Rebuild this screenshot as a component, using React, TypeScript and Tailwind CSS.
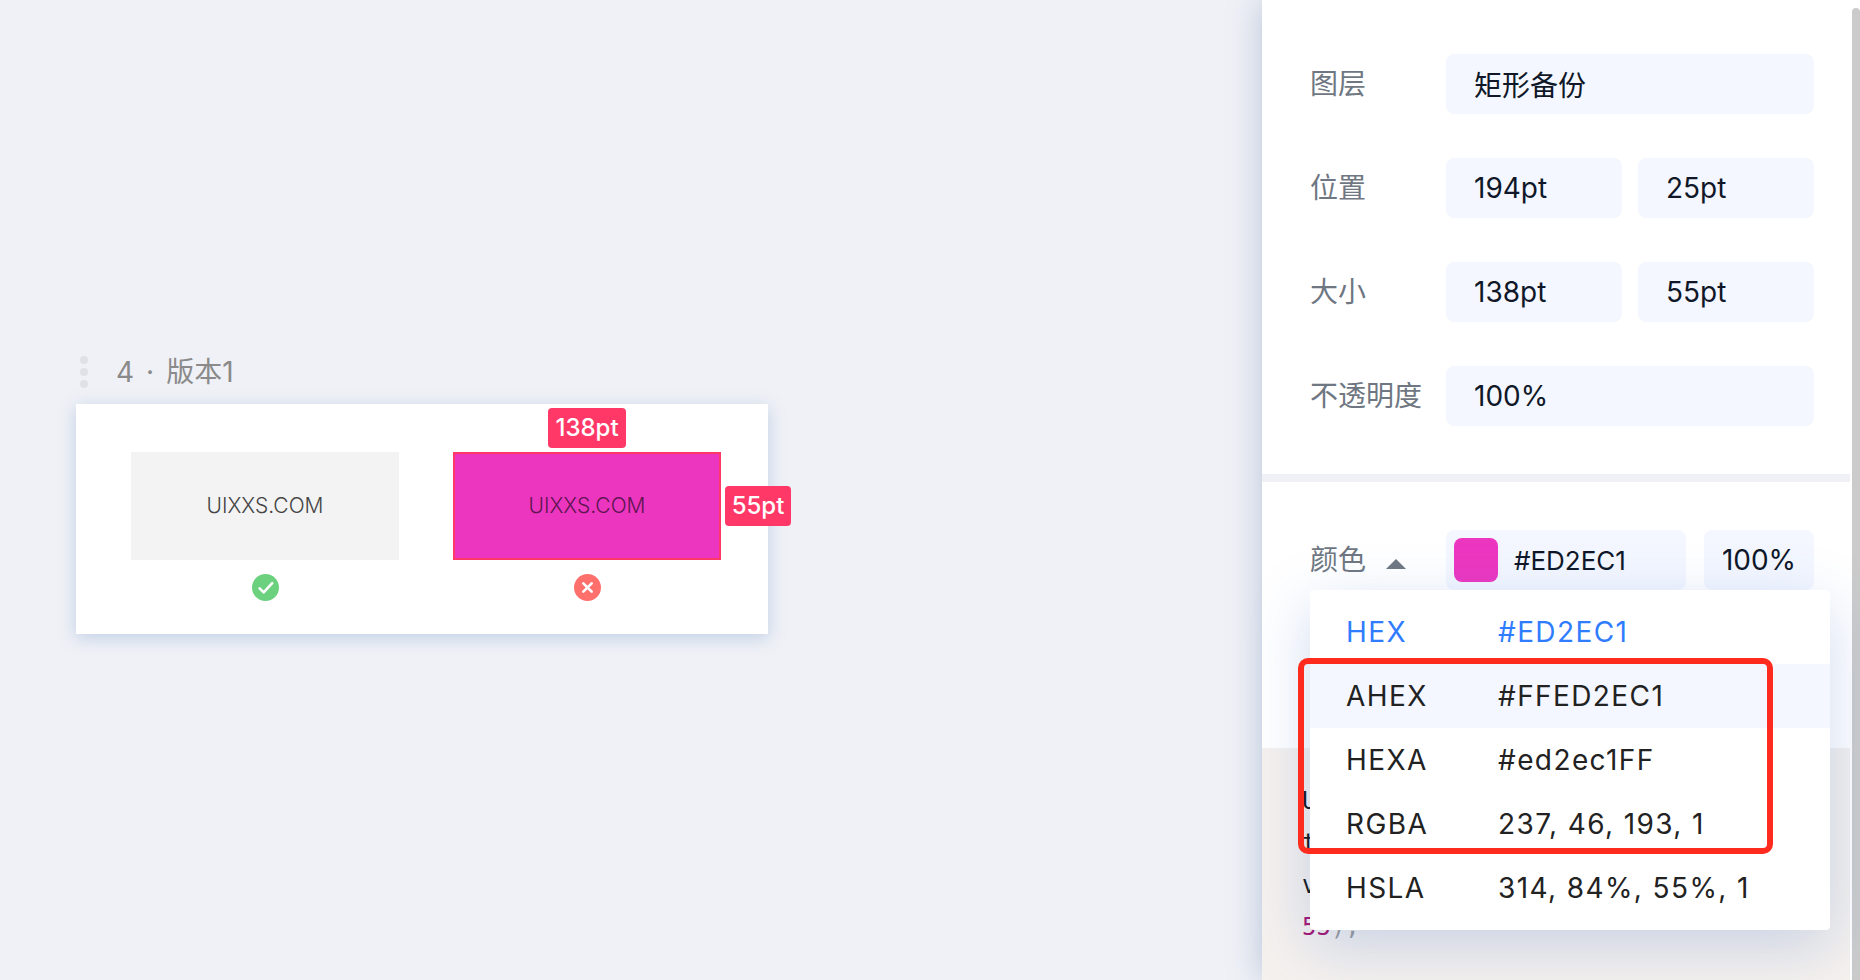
import { useState } from 'react';
import { clsx } from 'clsx';

const formats = [
  { name: 'HEX', value: '#ED2EC1' },
  { name: 'AHEX', value: '#FFED2EC1' },
  { name: 'HEXA', value: '#ed2ec1FF' },
  { name: 'RGBA', value: '237, 46, 193, 1' },
  { name: 'HSLA', value: '314, 84%, 55%, 1' },
];

interface FieldRowProps {
  id: string;
  label: string;
  values: string[];
}

const FieldRow = ({ id, label, values }: FieldRowProps) => (
  <div className="flex items-center">
    <label htmlFor={id} className="w-[136px] shrink-0 text-[#6f7782]">
      {label}
    </label>
    <div className="flex flex-1 gap-4">
      {values.map((value, i) => (
        <input
          key={i}
          id={i === 0 ? id : undefined}
          aria-label={i === 0 ? undefined : label}
          defaultValue={value}
          className="h-[60px] w-full min-w-0 flex-1 rounded-lg bg-[#f4f7ff] px-7 text-[#0f1728] outline-none"
        />
      ))}
    </div>
  </div>
);

const CheckIcon = () => (
  <svg viewBox="0 0 27 27" className="size-[27px]" fill="none">
    <circle cx="13.5" cy="13.5" r="13.5" fill="#6bd17f" />
    <path d="M7.600 14.400l4.100 4L20.200 9.200" stroke="#fff" strokeWidth="2.600" strokeLinecap="round" strokeLinejoin="round" />
  </svg>
);

const CrossIcon = () => (
  <svg viewBox="0 0 27 27" className="size-[27px]" fill="none">
    <circle cx="13.5" cy="13.5" r="13.5" fill="#ff706c" />
    <path d="M9.300 9.300l8.400 8.400M17.700 9.300l-8.400 8.400" stroke="#fff" strokeWidth="2.600" strokeLinecap="round" />
  </svg>
);

const Badge = ({ text, className }: { text: string; className: string }) => (
  <span
    className={clsx(
      'absolute flex h-10 items-center justify-center rounded bg-[#ff3868] text-2xl font-medium text-white',
      className
    )}
  >
    {text}
  </span>
);

const Artboard = () => (
  <section className="w-[692px]">
    <h2 className="flex h-8 items-center gap-3 text-[28px] text-[#8a8a8a]">
      <span className="ml-1 mr-4 flex flex-col gap-1">
        <i className="size-2 rounded-full bg-[#dfe1e6]" />
        <i className="size-2 rounded-full bg-[#dfe1e6]" />
        <i className="size-2 rounded-full bg-[#dfe1e6]" />
      </span>
      <span>4</span>
      <span>·</span>
      <span>版本1</span>
    </h2>
    <div className="mt-4 flex h-[230px] justify-between bg-white pl-[55px] pr-[47px] pt-12 text-[21px] font-light shadow-[0_4px_16px_rgba(110,145,200,0.35)]">
      <div className="flex w-[268px] flex-col items-center">
        <div className="flex h-[108px] w-full items-center justify-center bg-[#f3f3f3] text-[#444]">UIXXS.COM</div>
        <div className="mt-[14px]">
          <CheckIcon />
        </div>
      </div>
      <div className="flex w-[268px] flex-col items-center">
        <div className="relative flex h-[108px] w-full items-center justify-center border-2 border-[#ff3868] bg-[#ed36c0] text-[#5e1550]">
          UIXXS.COM
          <Badge text="138pt" className="bottom-full left-1/2 mb-[6px] w-[78px] -translate-x-1/2" />
          <Badge text="55pt" className="left-full top-1/2 ml-[6px] w-[66px] -translate-y-1/2" />
        </div>
        <div className="mt-[14px]">
          <CrossIcon />
        </div>
      </div>
    </div>
  </section>
);

const FormatMenu = ({ current, onSelect }: { current: string; onSelect: (name: string) => void }) => (
  <ul className="absolute left-12 right-5 top-[108px] z-10 rounded bg-white py-[10px] tracking-wider shadow-[0_16px_60px_rgba(75,120,200,0.26)]">
    {formats.map(format => (
      <li key={format.name}>
        <button
          onClick={() => onSelect(format.name)}
          className={clsx(
            'flex h-16 w-full items-center pl-9 text-left',
            format.name === current ? 'text-[#2f7cff]' : 'text-[#222]',
            format.name === 'AHEX' && 'bg-[#f4f7ff]'
          )}
        >
          <span className="w-[152px]">{format.name}</span>
          <span>{format.value}</span>
        </button>
      </li>
    ))}
    {/* highlight around the alpha formats */}
    <li aria-hidden className="pointer-events-none absolute -left-3 right-[57px] top-[68px] h-[196px] rounded-[10px] border-[6px] border-[#ff2b1f]" />
  </ul>
);

export default function App() {
  const [open, setOpen] = useState(true);
  const [current, setCurrent] = useState('HEX');

  return (
    <div className="flex h-screen overflow-hidden bg-[#eff1f6] font-['Inter','Noto_Sans_CJK_SC',sans-serif]">
      <main className="min-w-0 flex-1 pl-[76px] pt-[356px]">
        <Artboard />
      </main>

      <aside className="flex w-[598px] shrink-0 bg-white text-[28px] shadow-[0_0_32px_rgba(90,120,170,0.36)]">
        <div className="flex min-w-0 flex-1 flex-col">
          <section className="flex flex-col gap-11 border-b-8 border-[#eff1f6] pb-12 pl-12 pr-9 pt-[54px]">
            <FieldRow id="layer" label="图层" values={['矩形备份']} />
            <FieldRow id="position" label="位置" values={['194pt', '25pt']} />
            <FieldRow id="size" label="大小" values={['138pt', '55pt']} />
            <FieldRow id="opacity" label="不透明度" values={['100%']} />
          </section>

          <section className="relative h-[266px] pl-12 pr-9 pt-12">
            <div className="flex items-center">
              <button onClick={() => setOpen(!open)} className="flex w-[136px] shrink-0 items-center gap-5 text-[#6f7782]">
                颜色
                <svg viewBox="0 0 20 10" className="mt-2 h-[10px] w-5" fill="currentColor">
                  <path d="M10 0l10 10H0z" />
                </svg>
              </button>
              <div className="flex h-[60px] flex-1 items-center gap-4 rounded-lg bg-[#f4f7ff] pl-2">
                <span className="size-11 shrink-0 rounded-lg bg-[#ed36c0]" />
                <input aria-label="颜色" defaultValue="#ED2EC1" className="w-full min-w-0 bg-transparent text-[26px] text-[#0f1728] outline-none" />
              </div>
              <input
                aria-label="不透明度"
                defaultValue="100%"
                className="ml-[18px] h-[60px] w-[110px] rounded-lg bg-[#f4f7ff] text-center text-[#0f1728] outline-none"
              />
            </div>
            {open && <FormatMenu current={current} onSelect={setCurrent} />}
          </section>

          <pre className="flex-1 bg-[#f5f1ee] pl-10 pt-8 font-['DejaVu_Sans_Mono',monospace] text-2xl leading-[42px] text-[#111]">
            {'U\nt\nv\n'}
            <span className="text-[#a6116f]">55</span>
            <span className="text-[#999]">);</span>
          </pre>
        </div>
        <div className="ml-0.5 mt-2 w-2 rounded-t-full bg-[#cbcbcb]" />
      </aside>
    </div>
  );
}
